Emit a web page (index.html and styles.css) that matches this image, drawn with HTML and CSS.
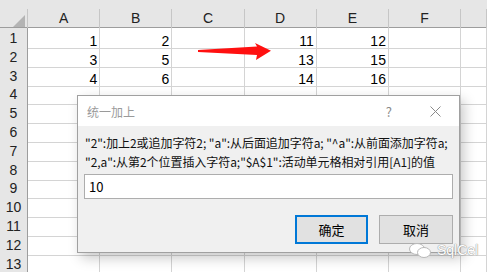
FILE: index.html
```html
<html>
<head>
  <title>统一加上</title>
  <link rel="stylesheet" href="styles.css">
</head>
<body>
  <div class="sheet">
    <div class="topband"></div>
    <div class="row head">
      <div class="corner"><span class="tri"></span></div>
      <div class="col">A</div><div class="col">B</div><div class="col">C</div>
      <div class="col">D</div><div class="col">E</div><div class="col">F</div><div class="col"></div>
    </div>
    <div class="row"><div class="num">1</div><div class="cell">1</div><div class="cell">2</div><div class="cell"></div><div class="cell">11</div><div class="cell">12</div><div class="cell"></div><div class="cell"></div></div>
    <div class="row"><div class="num">2</div><div class="cell">3</div><div class="cell">5</div><div class="cell"></div><div class="cell">13</div><div class="cell">15</div><div class="cell"></div><div class="cell"></div></div>
    <div class="row"><div class="num">3</div><div class="cell">4</div><div class="cell">6</div><div class="cell"></div><div class="cell">14</div><div class="cell">16</div><div class="cell"></div><div class="cell"></div></div>
    <div class="row"><div class="num">4</div><div class="cell"></div><div class="cell"></div><div class="cell"></div><div class="cell"></div><div class="cell"></div><div class="cell"></div><div class="cell"></div></div>
    <div class="row"><div class="num">5</div><div class="cell"></div><div class="cell"></div><div class="cell"></div><div class="cell"></div><div class="cell"></div><div class="cell"></div><div class="cell"></div></div>
    <div class="row"><div class="num">6</div><div class="cell"></div><div class="cell"></div><div class="cell"></div><div class="cell"></div><div class="cell"></div><div class="cell"></div><div class="cell"></div></div>
    <div class="row"><div class="num">7</div><div class="cell"></div><div class="cell"></div><div class="cell"></div><div class="cell"></div><div class="cell"></div><div class="cell"></div><div class="cell"></div></div>
    <div class="row"><div class="num">8</div><div class="cell"></div><div class="cell"></div><div class="cell"></div><div class="cell"></div><div class="cell"></div><div class="cell"></div><div class="cell"></div></div>
    <div class="row"><div class="num">9</div><div class="cell"></div><div class="cell"></div><div class="cell"></div><div class="cell"></div><div class="cell"></div><div class="cell"></div><div class="cell"></div></div>
    <div class="row"><div class="num">10</div><div class="cell"></div><div class="cell"></div><div class="cell"></div><div class="cell"></div><div class="cell"></div><div class="cell"></div><div class="cell"></div></div>
    <div class="row"><div class="num">11</div><div class="cell"></div><div class="cell"></div><div class="cell"></div><div class="cell"></div><div class="cell"></div><div class="cell"></div><div class="cell"></div></div>
    <div class="row"><div class="num">12</div><div class="cell"></div><div class="cell"></div><div class="cell"></div><div class="cell"></div><div class="cell"></div><div class="cell"></div><div class="cell"></div></div>
    <div class="row"><div class="num">13</div><div class="cell"></div><div class="cell"></div><div class="cell"></div><div class="cell"></div><div class="cell"></div><div class="cell"></div><div class="cell"></div></div>
  </div>

  <svg class="arrow" width="80" height="24" viewBox="195 40 80 24">
    <polygon points="198,50 257,46.5 255,43 271,50.7 256,60 257,55 198,52" fill="#ff1010"/>
  </svg>

  <div class="dialog">
    <div class="titlebar">
      <span class="title">统一加上</span>
      <span class="help">?</span>
      <svg class="close" width="11" height="11" viewBox="0 0 11 11">
        <path d="M0.5 0.5 L10.5 10.5 M10.5 0.5 L0.5 10.5" stroke="#8a8a8a" stroke-width="1"/>
      </svg>
    </div>
    <div class="content">
      <p class="hint">"2":加上2或追加字符2; "a":从后面追加字符a; "^a":从前面添加字符a;<br>"2,a":从第2个位置插入字符a;"$A$1":活动单元格相对引用[A1]的值</p>
      <div class="input">10</div>
      <div class="buttons">
        <div class="btn ok">确定</div>
        <div class="btn">取消</div>
      </div>
    </div>
  </div>

  <div class="mark">
    <svg width="23" height="15" viewBox="0 0 23 15">
      <ellipse cx="8" cy="6" rx="7.5" ry="5.5" fill="#fff" stroke="#b8b8b8"/>
      <ellipse cx="15" cy="9.5" rx="6.5" ry="5" fill="#fff" stroke="#b8b8b8"/>
    </svg>
    <span>SqlCel</span>
  </div>
</body>
</html>
```

FILE: styles.css
```css
body {
  margin: 0;
  width: 487px;
  height: 272px;
  overflow: hidden;
  background: #fff;
  font-family: "Liberation Sans", "Noto Sans CJK SC", sans-serif;
  color: #000;
  position: relative;
}
.topband {
  height: 9px;
  background: #e6e6e6;
}
.row {
  display: grid;
  grid-template-columns: 28px repeat(6, 72.2px) 1fr;
  height: 18.8px;
}
.row.head {
  height: 18px;
  background: #e6e6e6;
  border-bottom: 1px solid #9d9d9d;
  box-sizing: content-box;
}
.corner {
  position: relative;
  border-right: 1px solid #c6c6c6;
}
.tri {
  position: absolute;
  right: 2px;
  bottom: 1px;
  width: 0;
  height: 0;
  border-left: 12px solid transparent;
  border-bottom: 12px solid #b4b4b4;
}
.col {
  border-right: 1px solid #c6c6c6;
  text-align: center;
  font-size: 14px;
  line-height: 19px;
  color: #222;
}
.num {
  background: #e6e6e6;
  border-right: 1px solid #9d9d9d;
  border-bottom: 1px solid #c6c6c6;
  box-sizing: border-box;
  text-align: center;
  font-size: 14px;
  line-height: 20px;
  color: #222;
}
.cell {
  border-right: 1px solid #d4d4d4;
  border-bottom: 1px solid #d4d4d4;
  box-sizing: border-box;
  display: flex;
  align-items: flex-end;
  justify-content: flex-end;
  padding-right: 2px;
  font-size: 14px;
  line-height: 14px;
}
.arrow {
  position: absolute;
  left: 195px;
  top: 40px;
}
.dialog {
  position: absolute;
  left: 77px;
  top: 95px;
  width: 383px;
  height: 158px;
  box-sizing: border-box;
  border: 1px solid #a0a0a0;
  background: #f0f0f0;
  box-shadow: 4px 5px 12px rgba(0, 0, 0, 0.22);
  font-family: "Noto Sans CJK SC", "Liberation Sans", sans-serif;
}
.titlebar {
  height: 30px;
  background: #fff;
  display: flex;
  align-items: center;
  padding-left: 9px;
}
.title {
  flex: 1;
  font-size: 12px;
  color: #9a9a9a;
}
.help {
  font-size: 13px;
  color: #8a8a8a;
  margin-right: 38px;
}
.close {
  margin-right: 18px;
}
.content {
  padding: 7px 6px 0 6px;
}
.hint {
  margin: 0 0 3px 1px;
  font-size: 12px;
  line-height: 19px;
  letter-spacing: -0.06px;
  white-space: nowrap;
  color: #111;
}
.input {
  height: 25px;
  box-sizing: border-box;
  border: 1px solid #adadad;
  background: #fff;
  font-size: 13px;
  line-height: 23px;
  padding-left: 4px;
  width: 369px;
}
.buttons {
  display: flex;
  justify-content: flex-end;
  gap: 11px;
  margin-top: 16px;
  width: 369px;
}
.btn {
  width: 74px;
  height: 29px;
  box-sizing: border-box;
  border: 1px solid #adadad;
  background: #e1e1e1;
  font-size: 13px;
  line-height: 27px;
  text-align: center;
  color: #000;
}
.btn.ok {
  border: 2px solid #0078d7;
  line-height: 25px;
  width: 73px;
}
.mark {
  position: absolute;
  left: 409px;
  top: 242px;
  display: flex;
  align-items: center;
  gap: 5px;
}
.mark span {
  font-family: "Liberation Sans", sans-serif;
  font-size: 14px;
  color: #fff;
  text-shadow: 0 0 1px #888, 0 0 1px #888;
}
```
